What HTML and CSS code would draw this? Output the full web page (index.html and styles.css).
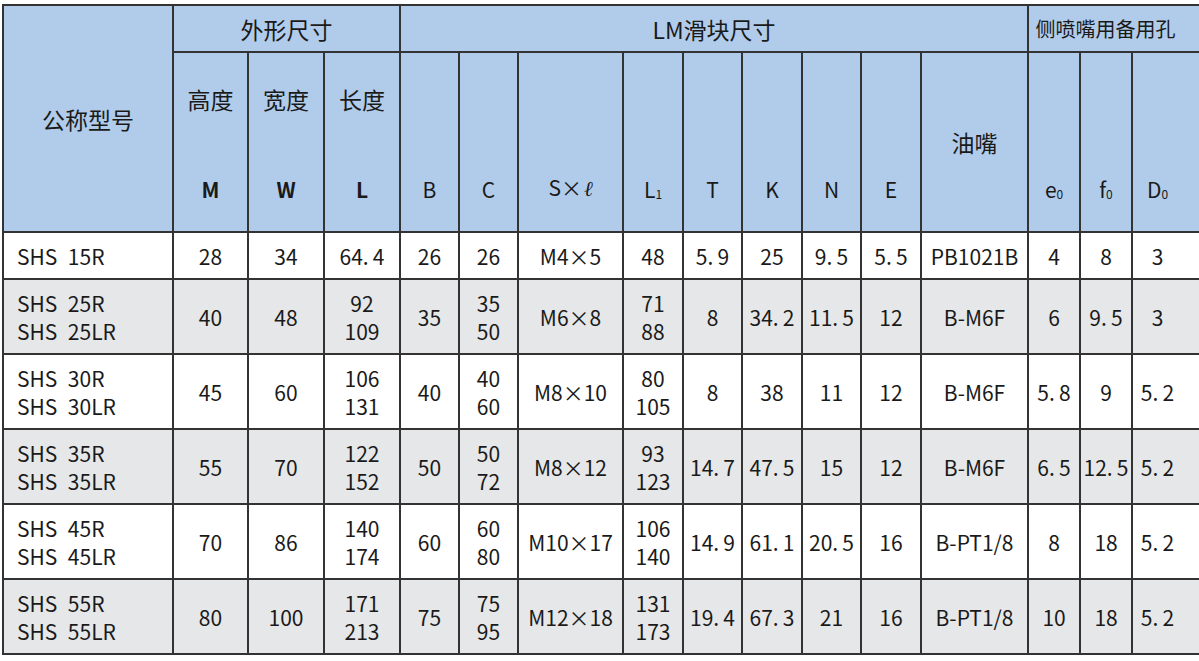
FILE: index.html
```html
<!DOCTYPE html>
<html lang="zh-CN">
<head>
<meta charset="utf-8">
<title>SHS 尺寸表</title>
<link rel="stylesheet" href="styles.css">
</head>
<body>
<table class="spec">
  <colgroup>
    <col class="c-model">
    <col class="c75"><col class="c76"><col class="c76">
    <col class="c59"><col class="c59"><col class="c105"><col class="c60"><col class="c59"><col class="c60"><col class="c59"><col class="c60">
    <col class="c107">
    <col class="c52"><col class="c52"><col class="c-last">
  </colgroup>
  <thead>
    <tr class="grp">
      <th rowspan="2" class="model-h">公称型号</th>
      <th colspan="3">外形尺寸</th>
      <th colspan="9">LM滑块尺寸</th>
      <th colspan="3" class="last side">侧喷嘴用备用孔</th>
    </tr>
    <tr class="sub">
      <th><span class="lbl">高度</span><b class="sym">M</b></th>
      <th><span class="lbl">宽度</span><b class="sym">W</b></th>
      <th><span class="lbl">长度</span><b class="sym">L</b></th>
      <th><span class="sym">B</span></th>
      <th><span class="sym">C</span></th>
      <th><span class="sym">S×<i class="ell">ℓ</i></span></th>
      <th><span class="sym">L<sub>1</sub></span></th>
      <th><span class="sym">T</span></th>
      <th><span class="sym">K</span></th>
      <th><span class="sym">N</span></th>
      <th><span class="sym">E</span></th>
      <th class="mid">油嘴</th>
      <th><span class="sym">e<sub>0</sub></span></th>
      <th><span class="sym">f<sub>0</sub></span></th>
      <th class="last"><span class="sym">D<sub>0</sub></span></th>
    </tr>
  </thead>
  <tbody>
    <tr class="r1">
      <td class="model">SHS&ensp;15R</td>
      <td>28</td><td>34</td><td>64.&thinsp;4</td>
      <td>26</td><td>26</td><td>M4×5</td><td>48</td><td>5.&thinsp;9</td><td>25</td><td>9.&thinsp;5</td><td>5.&thinsp;5</td>
      <td>PB1021B</td>
      <td>4</td><td>8</td><td class="last">3</td>
    </tr>
    <tr class="alt">
      <td class="model">SHS&ensp;25R<br>SHS&ensp;25LR</td>
      <td>40</td><td>48</td><td>92<br>109</td>
      <td>35</td><td>35<br>50</td><td>M6×8</td><td>71<br>88</td><td>8</td><td>34.&thinsp;2</td><td>11.&thinsp;5</td><td>12</td>
      <td>B-M6F</td>
      <td>6</td><td>9.&thinsp;5</td><td class="last">3</td>
    </tr>
    <tr>
      <td class="model">SHS&ensp;30R<br>SHS&ensp;30LR</td>
      <td>45</td><td>60</td><td>106<br>131</td>
      <td>40</td><td>40<br>60</td><td>M8×10</td><td>80<br>105</td><td>8</td><td>38</td><td>11</td><td>12</td>
      <td>B-M6F</td>
      <td>5.&thinsp;8</td><td>9</td><td class="last">5.&thinsp;2</td>
    </tr>
    <tr class="alt">
      <td class="model">SHS&ensp;35R<br>SHS&ensp;35LR</td>
      <td>55</td><td>70</td><td>122<br>152</td>
      <td>50</td><td>50<br>72</td><td>M8×12</td><td>93<br>123</td><td>14.&thinsp;7</td><td>47.&thinsp;5</td><td>15</td><td>12</td>
      <td>B-M6F</td>
      <td>6.&thinsp;5</td><td>12.&thinsp;5</td><td class="last">5.&thinsp;2</td>
    </tr>
    <tr>
      <td class="model">SHS&ensp;45R<br>SHS&ensp;45LR</td>
      <td>70</td><td>86</td><td>140<br>174</td>
      <td>60</td><td>60<br>80</td><td>M10×17</td><td>106<br>140</td><td>14.&thinsp;9</td><td>61.&thinsp;1</td><td>20.&thinsp;5</td><td>16</td>
      <td>B-PT1/8</td>
      <td>8</td><td>18</td><td class="last">5.&thinsp;2</td>
    </tr>
    <tr class="alt">
      <td class="model">SHS&ensp;55R<br>SHS&ensp;55LR</td>
      <td>80</td><td>100</td><td>171<br>213</td>
      <td>75</td><td>75<br>95</td><td>M12×18</td><td>131<br>173</td><td>19.&thinsp;4</td><td>67.&thinsp;3</td><td>21</td><td>16</td>
      <td>B-PT1/8</td>
      <td>10</td><td>18</td><td class="last">5.&thinsp;2</td>
    </tr>
  </tbody>
</table>
</body>
</html>
```

FILE: styles.css
```css
html, body {
  margin: 0;
  padding: 0;
  background: #ffffff;
  overflow: hidden;
}

body {
  font-family: "Noto Sans CJK SC", "Noto Sans", sans-serif;
  color: #1a1a1a;
}

.spec {
  border-collapse: collapse;
  table-layout: fixed;
  width: 1210px;
  margin: 4px 0 0 2px;
  font-size: 21px;
}

.c-model { width: 170px; }
.c75 { width: 75px; }
.c76 { width: 76px; }
.c59 { width: 59px; }
.c60 { width: 60px; }
.c105 { width: 105px; }
.c107 { width: 107px; }
.c52 { width: 52px; }
.c-last { width: 79px; }

.spec th,
.spec td {
  border: 2px solid #333333;
  padding: 0;
  text-align: center;
  white-space: nowrap;
}

.spec thead th {
  background: #b1cceb;
  font-weight: normal;
}

.grp th {
  height: 45px;
  font-size: 23px;
  line-height: 30px;
}

.grp th.side {
  font-size: 20px;
}

.model-h {
  font-size: 23px;
}

.sub th {
  height: 151px;
  vertical-align: bottom;
  padding-bottom: 27px;
}

.sub th.mid {
  vertical-align: middle;
  padding: 0;
  font-size: 23px;
}

.spec th.last,
.spec td.last {
  padding-right: 28px;
}

.lbl {
  display: block;
  font-size: 23px;
  line-height: 30px;
  margin-bottom: 60px;
}

.sym {
  display: block;
  font-size: 21px;
  line-height: 30px;
}

b.sym {
  font-weight: bold;
}

.sym sub {
  font-size: 12px;
  vertical-align: -1px;
  line-height: 0;
}

.ell {
  font-family: "DejaVu Serif", "Liberation Serif", serif;
  font-style: italic;
  font-weight: normal;
  margin-left: 2px;
}

.spec tbody td {
  line-height: 28px;
  height: 73px;
  background: #ffffff;
}

.spec tbody tr.r1 td {
  height: 45px;
}

.spec tbody tr.alt td {
  background: #e6e7e8;
}

.spec td.model {
  text-align: left;
  padding-left: 13px;
}
```
